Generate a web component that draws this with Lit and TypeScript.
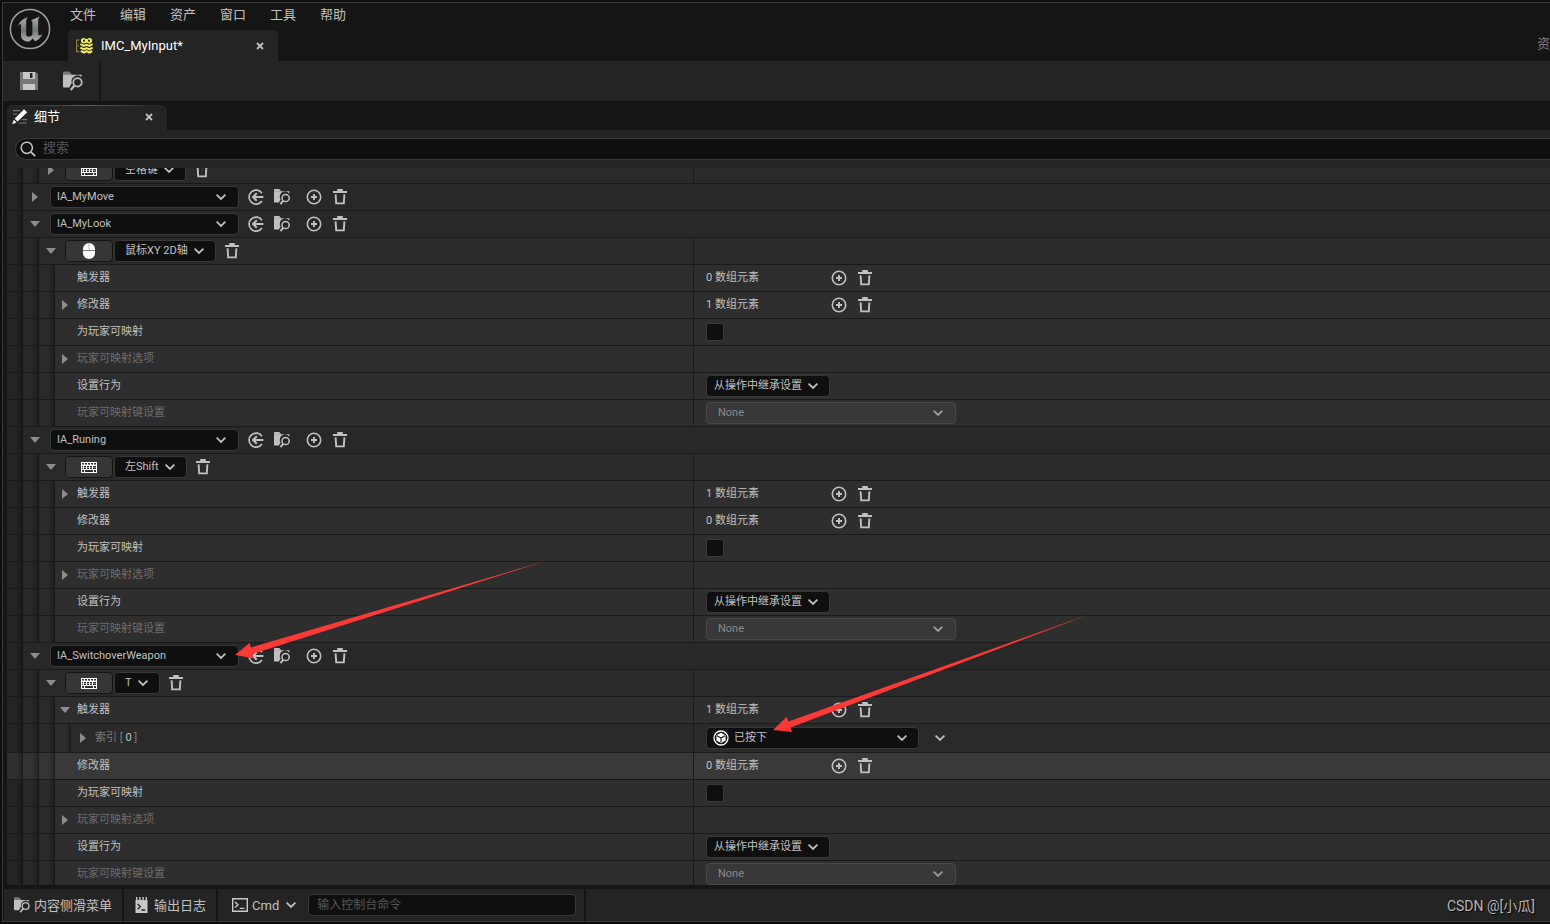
import { LitElement, html, svg, css, nothing, TemplateResult } from "lit";
import { customElement } from "lit/decorators.js";
import { classMap } from "lit/directives/class-map.js";

type Kind = "action" | "key" | "prop" | "index";
type Value =
  | { type: "array"; count: number }
  | { type: "check" }
  | { type: "behavior" }
  | { type: "none" }
  | { type: "trigger" };

interface Row {
  kind: Kind;
  label: string;
  expander?: "open" | "closed";
  dim?: boolean;
  hover?: boolean;
  device?: "keyboard" | "mouse";
  value?: Value;
}

const DEPTH: Record<Kind, number> = { action: 1, key: 2, prop: 3, index: 4 };

const mapping = (
  triggers: Row[],
  modifiers: Row
): Row[] => [
  ...triggers,
  modifiers,
  { kind: "prop", label: "为玩家可映射", value: { type: "check" } },
  { kind: "prop", label: "玩家可映射选项", expander: "closed", dim: true },
  { kind: "prop", label: "设置行为", value: { type: "behavior" } },
  { kind: "prop", label: "玩家可映射键设置", dim: true, value: { type: "none" } },
];

const ROWS: Row[] = [
  { kind: "key", label: "空格键", device: "keyboard", expander: "closed" },
  { kind: "action", label: "IA_MyMove", expander: "closed" },
  { kind: "action", label: "IA_MyLook", expander: "open" },
  { kind: "key", label: "鼠标XY 2D轴", device: "mouse", expander: "open" },
  ...mapping(
    [{ kind: "prop", label: "触发器", value: { type: "array", count: 0 } }],
    { kind: "prop", label: "修改器", expander: "closed", value: { type: "array", count: 1 } }
  ),
  { kind: "action", label: "IA_Runing", expander: "open" },
  { kind: "key", label: "左Shift", device: "keyboard", expander: "open" },
  ...mapping(
    [{ kind: "prop", label: "触发器", expander: "closed", value: { type: "array", count: 1 } }],
    { kind: "prop", label: "修改器", value: { type: "array", count: 0 } }
  ),
  { kind: "action", label: "IA_SwitchoverWeapon", expander: "open" },
  { kind: "key", label: "T", device: "keyboard", expander: "open" },
  ...mapping(
    [
      { kind: "prop", label: "触发器", expander: "open", value: { type: "array", count: 1 } },
      { kind: "index", label: "0", expander: "closed", value: { type: "trigger" } },
    ],
    { kind: "prop", label: "修改器", hover: true, value: { type: "array", count: 0 } }
  ),
];

const icon = (size: number, body: TemplateResult | TemplateResult[]) =>
  html`<svg class="icon" width=${size} height=${size} viewBox="0 0 16 16" aria-hidden="true">${body}</svg>`;

const chevron = () =>
  html`<svg class="chevron" width="10" height="6" viewBox="0 0 10 6" aria-hidden="true">
    <path d="M.6 .7 5 5 9.4 .7" fill="none" stroke="currentColor" stroke-width="1.8" />
  </svg>`;

const close = () =>
  html`<svg width="8" height="8" viewBox="0 0 8 8" aria-hidden="true">
    <path d="M1 1l6 6M7 1l-6 6" stroke="currentColor" stroke-width="1.8" />
  </svg>`;

const useSelected = svg`
  <path d="M13.9 4.2A7 7 0 1 0 13.9 12" fill="none" stroke="currentColor" stroke-width="1.7"/>
  <path d="M15.4 8H5M8.8 4.2 5 8l3.8 3.8" fill="none" stroke="currentColor" stroke-width="2"/>`;

const browse = svg`
  <path d="M0 .6Q0 0 .6 0H5.2L7.4 2.6H0Z" fill="currentColor"/>
  <path d="M0 2.2H15.4V4.8A5.2 5.2 0 0 0 6.6 10.6L4.8 13.6H0Z" fill="currentColor"/>
  <circle cx="11.6" cy="9" r="3.6" fill="none" stroke="currentColor" stroke-width="1.5"/>
  <path d="M9.3 11.6 6.4 15.2" stroke="currentColor" stroke-width="1.9"/>`;

const browseFaded = svg`
  <path d="M0 1Q0 .3.7.3H4.8L7 2.6V3.4H0Z" fill="currentColor" opacity=".55"/>
  <path d="M0 3H15V4.8A4.9 4.9 0 0 0 7 9.6L5 13.2H1Q0 13.2 0 12.2Z" fill="currentColor"/>
  <circle cx="11.6" cy="9" r="3.4" fill="none" stroke="currentColor" stroke-width="1.4"/>
  <path d="M9.3 11.4 6.2 15.2" stroke="currentColor" stroke-width="1.6"/>`;

const add = svg`
  <circle cx="8" cy="8" r="6.7" fill="none" stroke="currentColor" stroke-width="1.6"/>
  <path d="M8 5V11M5 8H11" stroke="currentColor" stroke-width="1.9"/>`;

const trash = svg`
  <path d="M5.2 0H10.8V2H5.2ZM1 2H15V4H1Z" fill="currentColor"/>
  <path d="M3.6 5.4 4.2 14.4H11.8L12.4 5.4" fill="none" stroke="currentColor" stroke-width="1.9"/>`;

const keyboard = svg`
  <path d="M0 0H16V11H0Z" fill="#fff"/>
  <path d="M1 1h2v2H1zM4 1h2v2H4zM7 1h2v2H7zM10 1h2v2h-2zM13 1h2v2h-2zM1 4h1v3H1zM3 4h2v3H3zM6 4h2v3H6zM9 4h2v3H9zM12 4h3v3h-3zM1 8h2v2H1zM4 8h8v2H4zM13 8h2v2h-2z" fill="#303030"/>
  <path d="M1 5.5H15M1 2.5H15" stroke="#fff" stroke-width="1" opacity=".45"/>`;

const mouse = svg`
  <path d="M0 6.3A6 6.3 0 0 1 12 6.3V10A6 6 0 0 1 0 10Z" fill="#fff"/>
  <path d="M0 7.5H12" stroke="#7c7c7c" stroke-width="1"/>
  <path d="M6 0V7" stroke="#b5b5b5" stroke-width="1"/>`;

@customElement("details-row")
class DetailsRow extends LitElement {
  static properties = { row: { attribute: false } };
  declare row: Row;

  static styles = css`
    :host {
      display: block;
      font-family: Roboto, "Noto Sans CJK SC", sans-serif;
      font-size: 11px;
      line-height: 16px;
      color: #c0c0c0;
    }
    .row {
      display: flex;
      height: 26px;
      border-bottom: 1px solid #1a1a1a;
      --c0: #242424;
      --c1: #282828;
      --c2: #2a2a2a;
      --c3: #2e2e2e;
      --c4: #2a2a2a;
    }
    .row.index { height: 28px; }
    .row.hover {
      --c0: #2f2f2f;
      --c1: #333333;
      --c2: #353535;
      --c3: #393939;
    }
    .indents { display: flex; }
    .indent {
      width: 16px;
      background-image: linear-gradient(90deg, transparent 9px, rgba(0, 0, 0, 0.2) 14px, rgba(0, 0, 0, 0.42) 15px);
    }
    .d0 { background-color: var(--c0); }
    .d1 { background-color: var(--c1); }
    .d2 { background-color: var(--c2); }
    .d3 { background-color: var(--c3); }
    .d4 { background-color: var(--c4); }
    .frame {
      flex: 1;
      display: grid;
      grid-template-columns: minmax(0, 687fr) minmax(0, 856fr);
    }
    .frame.whole { grid-template-columns: minmax(0, 1fr); }
    .name {
      display: flex;
      align-items: stretch;
      border-right: 1px solid #1a1a1a;
      box-sizing: border-box;
    }
    .whole .name { border-right: 0; }
    .main {
      flex: 1;
      display: flex;
      align-items: center;
    }
    .value {
      display: flex;
      align-items: center;
      padding-left: 12px;
    }
    button {
      display: grid;
      place-items: center;
      padding: 0;
      border: 0;
      background: none;
      color: inherit;
      font: inherit;
    }
    .expander {
      width: 24px;
      height: 24px;
      color: #8c8c8c;
    }
    .prop .expander { width: 20px; margin-right: 2px; }
    .dim { color: #6c6c6c; }
    .bracket { color: #7c7c7c; }
    .tools { display: flex; gap: 10px; }
    .tools .gap { width: 6px; margin-right: -10px; }
    .action .tools { margin-left: 10px; }
    .key .tools { margin-left: 8px; }
    .pick {
      display: inline-grid;
      grid-template-columns: auto;
      align-items: center;
    }
    .pick > * { grid-area: 1 / 1; }
    .pick .chevron {
      justify-self: end;
      margin-right: 12px;
      pointer-events: none;
    }
    .pick .glyph {
      margin-left: 7px;
      pointer-events: none;
    }
    select {
      appearance: none;
      box-sizing: border-box;
      width: 100%;
      height: 22px;
      margin: 0;
      padding: 0 27px 0 7px;
      border: 1px solid #383838;
      border-radius: 4px;
      background: #0f0f0f;
      color: #c0c0c0;
      font: inherit;
      opacity: 1;
    }
    .action .pick { width: 189px; margin-left: 3px; margin-right: -1px; }
    .action select { padding-left: 6px; }
    .action .pick .chevron { margin-right: 13px; }
    .key select { padding-left: 10px; padding-right: 27px; }
    .behavior { width: 124px; }
    .none { width: 250px; color: #9a9a9a; }
    .none select {
      padding-left: 11px;
      border-color: #484848;
      background: #383838;
      color: #8a8a8a;
    }
    .trigger { width: 213px; }
    .trigger select { padding-left: 27px; }
    .pick.none .chevron { margin-right: 13px; }
    .device {
      box-sizing: border-box;
      width: 48px;
      height: 22px;
      margin-right: 1px;
      margin-left: 2px;
      border: 1px solid #161616;
      border-radius: 4px;
      background: #363636;
    }
    .count { width: 125px; }
    .more { margin-left: 16px; }
    input {
      appearance: none;
      box-sizing: border-box;
      width: 18px;
      height: 18px;
      margin: 0;
      border: 1px solid #383838;
      border-radius: 3px;
      background: #0f0f0f;
    }
  `;

  private pick(label: string, name: string, cls: string, disabled = false, glyph: unknown = nothing) {
    return html`<span class="pick ${cls}">
      <select aria-label=${name} ?disabled=${disabled}><option>${label}</option></select>
      ${glyph}${chevron()}
    </span>`;
  }

  private expander() {
    const state = this.row.expander;
    if (!state) return html`<span class="expander"></span>`;
    return html`<button class="expander" aria-label="展开" aria-expanded=${state === "open"}>
      ${state === "open"
        ? html`<svg width="10" height="6" viewBox="0 0 10 6"><path d="M0 0H10L5 6Z" fill="currentColor" /></svg>`
        : html`<svg width="6" height="10" viewBox="0 0 6 10"><path d="M0 0V10L6 5Z" fill="currentColor" /></svg>`}
    </button>`;
  }

  private tool(label: string, body: TemplateResult) {
    return html`<button aria-label=${label}>${icon(16, body)}</button>`;
  }

  private main() {
    const r = this.row;
    switch (r.kind) {
      case "action":
        return html`${this.pick(r.label, "输入操作", "")}
          <span class="tools">
            ${this.tool("使用选中", useSelected)}${this.tool("浏览", browse)}
            <span class="gap"></span>
            ${this.tool("添加", add)}${this.tool("删除", trash)}
          </span>`;
      case "key":
        return html`<button class="device" aria-label="设备">
            ${r.device === "mouse"
              ? html`<svg width="12" height="16" viewBox="0 0 12 16">${mouse}</svg>`
              : html`<svg width="16" height="11" viewBox="0 0 16 11">${keyboard}</svg>`}
          </button>
          ${this.pick(r.label, "按键", "")}
          <span class="tools">${this.tool("删除", trash)}</span>`;
      case "index":
        return html`<span><span class="bracket">索引 [</span> ${r.label} <span class="bracket">]</span></span>`;
      default:
        return html`<span class=${classMap({ dim: !!r.dim })}>${r.label}</span>`;
    }
  }

  private value() {
    const v = this.row.value;
    if (!v) return nothing;
    switch (v.type) {
      case "array":
        return html`<span class="count">${v.count} 数组元素</span>
          <span class="tools">${this.tool("添加", add)}${this.tool("删除", trash)}</span>`;
      case "check":
        return html`<input type="checkbox" aria-label=${this.row.label} />`;
      case "behavior":
        return this.pick("从操作中继承设置", this.row.label, "behavior");
      case "none":
        return this.pick("None", this.row.label, "none", true);
      case "trigger":
        return html`${this.pick("已按下", "触发器类型", "trigger", false, html`
            <svg class="glyph" width="16" height="16" viewBox="0 0 16 16">
              <circle cx="8" cy="8" r="7" fill="none" stroke="#fff" stroke-width="1.3" />
              <path d="M8 2.8 12.6 5.2V10.6L8 13.2 3.4 10.6V5.2Z" fill="#fff" />
              <path d="M4 5.8 8 8V12.6M8 8 12 5.8" fill="none" stroke="#0f0f0f" stroke-width="1.1" />
            </svg>`)}
          <button class="more" aria-label="更多">${chevron()}</button>`;
    }
  }

  render() {
    const r = this.row;
    const depth = DEPTH[r.kind];
    const whole = r.kind === "action";
    return html`<div class=${classMap({ row: true, [r.kind]: true, hover: !!r.hover })}>
      <div class=${classMap({ frame: true, whole, [`d${depth}`]: true })}>
        <div class="name">
          <div class="indents">
            ${Array.from({ length: depth }, (_, i) => html`<span class="indent d${i}"></span>`)}
          </div>
          <div class="main">${this.expander()}${this.main()}</div>
        </div>
        ${whole ? nothing : html`<div class="value">${this.value()}</div>`}
      </div>
    </div>`;
  }
}

@customElement("app-root")
class AppRoot extends LitElement {
  static styles = css`
    :host {
      display: flex;
      flex-direction: column;
      position: relative;
      box-sizing: border-box;
      height: 100vh;
      min-height: 320px;
      padding: 2px 0 2px 2px;
      overflow: hidden;
      background: #0d0d0d;
      font-family: Roboto, "Noto Sans CJK SC", sans-serif;
      font-size: 13px;
      line-height: 18px;
      color: #c0c0c0;
    }
    .window {
      flex: 1;
      min-height: 0;
      display: flex;
      flex-direction: column;
      border: 1px solid #3a3a3a;
      border-right: 0;
      background: #151515;
    }
    button {
      display: flex;
      align-items: center;
      padding: 0;
      border: 0;
      background: none;
      color: inherit;
      font: inherit;
    }
    header {
      display: flex;
      height: 58px;
      background: #151515;
    }
    .logo { margin: 5px 0 0 6px; }
    .head { flex: 1; padding-left: 7px; }
    .menu {
      display: flex;
      height: 24px;
      margin-bottom: 3px;
    }
    .menu button { padding: 0 12px; }
    .tab {
      box-sizing: border-box;
      display: flex;
      align-items: center;
      border-radius: 5px 5px 0 0;
      background: #242424;
      color: #fff;
    }
    .tab button { margin-left: auto; color: #c0c0c0; }
    .asset {
      width: 210px;
      height: 31px;
      margin-left: 10px;
      padding: 0 14px 0 8px;
      gap: 8px;
    }
    .parent {
      align-self: flex-end;
      height: 26px;
      width: 13px;
      color: #7c7c7c;
      white-space: nowrap;
    }
    .toolbar {
      display: flex;
      height: 40px;
      background: #242424;
    }
    .toolbar .set {
      display: flex;
      align-items: center;
      gap: 24px;
      padding: 0 16px 0 16px;
      border-right: 2px solid #181818;
    }
    .strip {
      padding: 4px 0 0 4px;
    }
    .details {
      width: 160px;
      height: 25px;
      padding: 0 14px 2px 5px;
      gap: 6px;
      border-top: 1px solid transparent;
      background:
        linear-gradient(#242424, #242424) padding-box,
        linear-gradient(90deg, #242424 4px, #0b6fd0 50%, #242424 156px) border-box;
    }
    .panel {
      flex: 1;
      min-height: 0;
      display: flex;
      flex-direction: column;
      margin: 0 0 4px 4px;
      background: #242424;
    }
    .search {
      display: flex;
      align-items: center;
      gap: 7px;
      box-sizing: border-box;
      height: 22px;
      margin: 8px 0 8px 8px;
      padding-left: 4px;
      border: 1px solid #383838;
      border-right: 0;
      border-radius: 11px 0 0 11px;
      background: #0f0f0f;
    }
    input {
      flex: 1;
      min-width: 0;
      padding: 0 0 2px;
      border: 0;
      outline: 0;
      background: none;
      color: #c0c0c0;
      font: inherit;
    }
    input::placeholder { color: #575757; opacity: 1; }
    .rows {
      flex: 1;
      min-height: 0;
      overflow-y: auto;
      scrollbar-width: none;
    }
    footer {
      display: flex;
      height: 32px;
      margin-left: 1px;
      background: #242424;
    }
    .cell {
      display: flex;
      align-items: center;
      border-right: 2px solid #151515;
      padding: 0 10px;
    }
    .cell button { gap: 4px; }
    .cell span { padding-top: 2px; }
    .cell .log { gap: 5px; }
    .cmd {
      padding-left: 14px;
      padding-right: 8px;
      gap: 12px;
    }
    .cmd .chevron { margin-left: 3px; }
    .console {
      box-sizing: border-box;
      flex: none;
      width: 268px;
      height: 22px;
      padding: 0 8px;
      border: 1px solid #383838;
      border-radius: 4px;
      background: #0f0f0f;
      font-size: 12px;
    }
    .credit {
      margin-left: auto;
      padding: 8px 15px 0 0;
      font-size: 14px;
      color: #b4b4b4;
      text-shadow: 1px 1px 1px #000;
    }
    .notes {
      position: absolute;
      top: 0;
      left: 0;
      pointer-events: none;
    }
  `;

  firstUpdated() {
    requestAnimationFrame(() => {
      const rows = this.renderRoot.querySelector(".rows");
      if (rows) rows.scrollTop = 11;
    });
  }

  render() {
    return html`
      <div class="window">
        <header>
          <svg class="logo" width="42" height="42" viewBox="0 0 42 42" role="img" aria-label="Unreal">
            <defs>
              <linearGradient id="metal" x1="0" y1="0" x2="0" y2="1">
                <stop offset="0" stop-color="#b0b0b0" />
                <stop offset=".55" stop-color="#6f7476" />
                <stop offset="1" stop-color="#b0b0b0" />
              </linearGradient>
            </defs>
            <circle cx="21" cy="21" r="19.6" fill="#151515" stroke="#9a9fa1" stroke-width="1.5" />
            <path
              d="M8.5 18.6C10 13.8 13.6 10.6 19 9.4 17.6 10.6 17.2 11.6 17.2 13.4V26.2C17.2 27.6 18.2 28.6 19.6 28.6 21.2 28.6 22.4 27.8 23.4 26.8V14.2C23.4 13 22.9 12.4 21.8 12.2 24.4 11.6 28 10 30.8 8.6 29.6 10.2 29.2 11.4 29.2 13V25.4C29.2 26.8 29.8 27.4 30.8 27.3 31.9 27.2 32.8 26.5 33.6 25.5 32.4 29.4 29.6 32 26.3 33.3L23.7 30.4 20.4 33.5C15.6 33.9 12 31.4 12 27.2V17.4C12 16.4 11.6 16 10.9 16.2 10 16.4 9.2 17.4 8.5 18.6Z"
              fill="url(#metal)"
            />
          </svg>
          <div class="head">
            <nav class="menu">
              ${["文件", "编辑", "资产", "窗口", "工具", "帮助"].map((m) => html`<button>${m}</button>`)}
            </nav>
            <div class="tab asset">
              <svg width="17" height="16" viewBox="0 0 17 16">
                <path d="M3.4 2H.6V13.6H3.4M.6 8H3" fill="none" stroke="#8c8737" stroke-width="1.1" />
                <path d="M5 1.4Q6 0 8 0L10.6 1.2 13 0Q15 0 16 1.4V4L13.4 5.8 10.6 4.6 7.8 5.8 5 4Z" fill="#f4ef62" />
                <circle cx="8" cy="2.7" r="1.1" fill="#242424" />
                <circle cx="13" cy="2.7" r="1.1" fill="#242424" />
                <path
                  d="M4.4 6.2 8 8 10.6 6.8 13.2 8 16.6 6.2M4.4 9.6 8 11.4 10.6 10.2 13.2 11.4 16.6 9.6M4.8 13 8 14.6 10.6 13.2 13.2 14.6 16.2 13"
                  fill="none" stroke="#f4ef62" stroke-width="2"
                />
              </svg>
              <span>IMC_MyInput*</span>
              <button aria-label="关闭">${close()}</button>
            </div>
          </div>
          <span class="parent">资</span>
        </header>

        <div class="toolbar">
          <div class="set">
            <button aria-label="保存">
              <svg width="20" height="20" viewBox="0 0 20 20">
                <path d="M1 1H17L19 3V19H1Z" fill="#777" />
                <path d="M4 1H16V8H4Z" fill="#c8c8c8" />
                <path d="M11 2H13.5V7H11Z" fill="#242424" />
                <path d="M4 13H16V19H4Z" fill="#c8c8c8" />
              </svg>
            </button>
            <button aria-label="浏览">${icon(20, browseFaded)}</button>
          </div>
        </div>

        <div class="strip">
          <div class="tab details">
            <svg width="16" height="16" viewBox="0 0 16 16">
              <path d="M1 1.6H8M1 5H5M10 10.6H15M7 14H15" stroke="#777" stroke-width="1.2" />
              <path d="M12 .2 15.2 3.2 5.6 12.6 2.6 9.8ZM1.8 10.7 4.6 13.4.2 15.2Z" fill="#fff" />
            </svg>
            <span>细节</span>
            <button aria-label="关闭">${close()}</button>
          </div>
        </div>

        <main class="panel">
          <label class="search">
            <svg width="16" height="16" viewBox="0 0 16 16" aria-hidden="true">
              <circle cx="6.8" cy="6.8" r="5.6" fill="none" stroke="#c8c8c8" stroke-width="1.5" />
              <path d="M10.8 10.8 15.2 15.2" stroke="#c8c8c8" stroke-width="1.7" />
            </svg>
            <input type="text" placeholder="搜索" aria-label="搜索" />
          </label>
          <div class="rows">${ROWS.map((row) => html`<details-row .row=${row}></details-row>`)}</div>
        </main>

        <footer>
          <div class="cell">
            <button>${icon(16, browseFaded)}<span>内容侧滑菜单</span></button>
          </div>
          <div class="cell">
            <button class="log">
              <svg width="15" height="16" viewBox="0 0 15 16">
                <path d="M1.5 3H13.5V16H1.5ZM2 0H3.4V4H2ZM5.2 0H6.6V4H5.2ZM8.4 0H9.8V4H8.4ZM11.6 0H13V4H11.6Z" fill="#c8c8c8" />
                <path d="M3.6 7 6.4 9.6 3.6 12.2M7.4 13H11.2" fill="none" stroke="#242424" stroke-width="1.3" />
              </svg>
              <span>输出日志</span>
            </button>
          </div>
          <div class="cell cmd">
            <button>
              <svg width="16" height="14" viewBox="0 0 16 14">
                <path d="M.7.7H15.3V13.3H.7Z" fill="none" stroke="#c8c8c8" stroke-width="1.4" />
                <path d="M3 4 6 6.8 3 9.6M7.6 10.4H12.4" fill="none" stroke="#c8c8c8" stroke-width="1.4" />
              </svg>
              <span>Cmd</span>${chevron()}
            </button>
            <input class="console" type="text" placeholder="输入控制台命令" aria-label="输入控制台命令" />
          </div>
          <span class="credit">CSDN @[小瓜]</span>
        </footer>
      </div>

      <svg class="notes" width="1100" height="740" viewBox="0 0 1100 740" aria-hidden="true">
        <path d="M235 655 249.5 643 251 647.5 547 560.5 252.5 654 254 658.5Z" fill="#fb3a38" />
        <path d="M773 730 786.5 717 788.5 721.5 1089 614.5 790.5 727.5 792 732Z" fill="#fb3a38" />
      </svg>
    `;
  }
}
